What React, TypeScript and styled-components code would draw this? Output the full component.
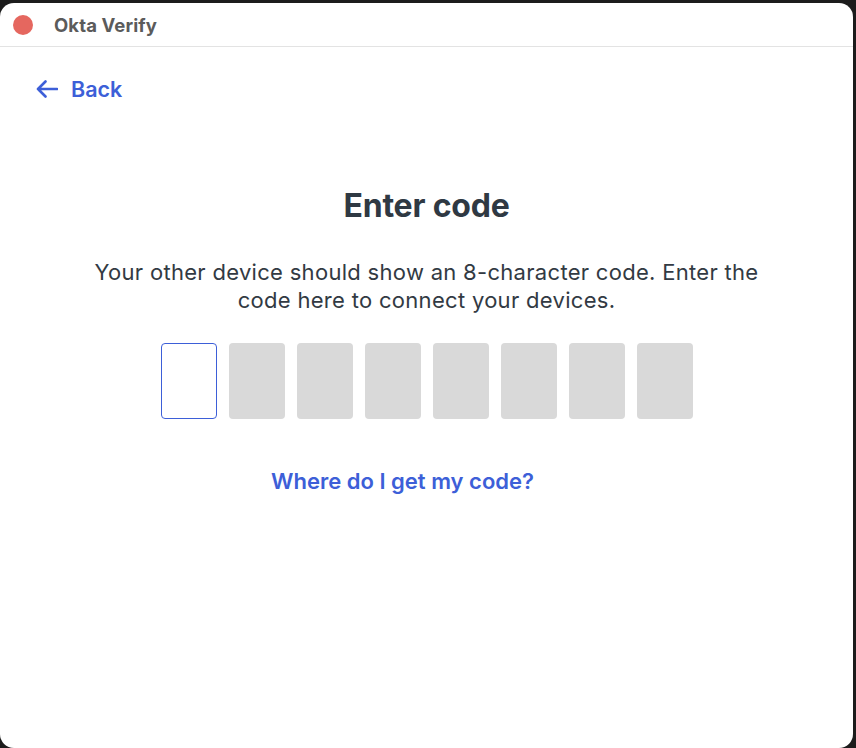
import React, { FC } from "react";
import styled, { createGlobalStyle } from "styled-components";

const GlobalStyle = createGlobalStyle`
  html, body {
    margin: 0;
    padding: 0;
    background: #1c1c1c;
  }
  body {
    font-family: Inter, "Noto Sans", "Liberation Sans", sans-serif;
    -webkit-font-smoothing: antialiased;
  }
`;

const CODE_LENGTH = 8;

const Desktop = styled.div`
  width: 856px;
  height: 748px;
  padding: 3px 3px 0 0;
  box-sizing: border-box;
  background: #1c1c1c;
`;

const Window = styled.div`
  height: 100%;
  background: #ffffff;
  border-radius: 14px;
  overflow: hidden;
  display: flex;
  flex-direction: column;
`;

const TitleBar = styled.div`
  height: 43px;
  display: flex;
  align-items: center;
  padding-left: 13px;
  gap: 21px;
  border-bottom: 1px solid #e3e3e3;
  flex-shrink: 0;
`;

const CloseDot = styled.span`
  width: 20px;
  height: 20px;
  border-radius: 50%;
  background: #e5675f;
`;

const Title = styled.span`
  font-size: 18.5px;
  font-weight: 700;
  color: #5b5b5b;
  letter-spacing: 0.1px;
`;

const Content = styled.div`
  flex: 1;
  display: flex;
  flex-direction: column;
  padding: 29px 36px 0;
`;

const BackLink = styled.a`
  display: inline-flex;
  align-items: center;
  gap: 13px;
  align-self: flex-start;
  color: #3d5fd8;
  font-size: 21.5px;
  font-weight: 600;
  text-decoration: none;
  cursor: pointer;
`;

const Heading = styled.h1`
  margin: 84px 0 0;
  text-align: center;
  font-size: 32px;
  font-weight: 700;
  color: #2f3943;
  letter-spacing: -0.2px;
`;

const Description = styled.p`
  margin: 33px auto 0;
  max-width: 700px;
  text-align: center;
  font-size: 22px;
  line-height: 28px;
  letter-spacing: 0.3px;
  color: #323a43;
`;

const CodeRow = styled.div`
  margin-top: 29px;
  display: flex;
  justify-content: center;
  gap: 12px;
`;

const CodeBox = styled.div<{ $active?: boolean }>`
  width: 56px;
  height: 76px;
  box-sizing: border-box;
  border-radius: 4px;
  background: ${({ $active }) => ($active ? "#ffffff" : "#d9d9d9")};
  border: ${({ $active }) => ($active ? "1.5px solid #3d5fd8" : "none")};
`;

const HelpRow = styled.div`
  margin-top: 49px;
  display: flex;
  justify-content: center;
  padding-right: 48px;
`;

const HelpLink = styled.a`
  color: #3d5fd8;
  font-size: 22px;
  font-weight: 600;
  text-decoration: none;
  cursor: pointer;
`;

const ArrowLeft: FC = () => (
  <svg width="22" height="18" viewBox="0 0 22 18" fill="none">
    <path
      d="M21 9H2M9.5 1.5L2 9l7.5 7.5"
      stroke="#3d5fd8"
      strokeWidth="2.6"
      strokeLinecap="round"
      strokeLinejoin="round"
    />
  </svg>
);

export default function App() {
  return (
    <>
      <GlobalStyle />
      <Desktop>
        <Window>
          <TitleBar>
            <CloseDot />
            <Title>Okta Verify</Title>
          </TitleBar>
          <Content>
            <BackLink>
              <ArrowLeft />
              Back
            </BackLink>
            <Heading>Enter code</Heading>
            <Description>
              Your other device should show an 8-character code. Enter the
              code here to connect your devices.
            </Description>
            <CodeRow>
              {Array.from({ length: CODE_LENGTH }, (_, i) => (
                <CodeBox key={i} $active={i === 0} />
              ))}
            </CodeRow>
            <HelpRow>
              <HelpLink>Where do I get my code?</HelpLink>
            </HelpRow>
          </Content>
        </Window>
      </Desktop>
    </>
  );
}
